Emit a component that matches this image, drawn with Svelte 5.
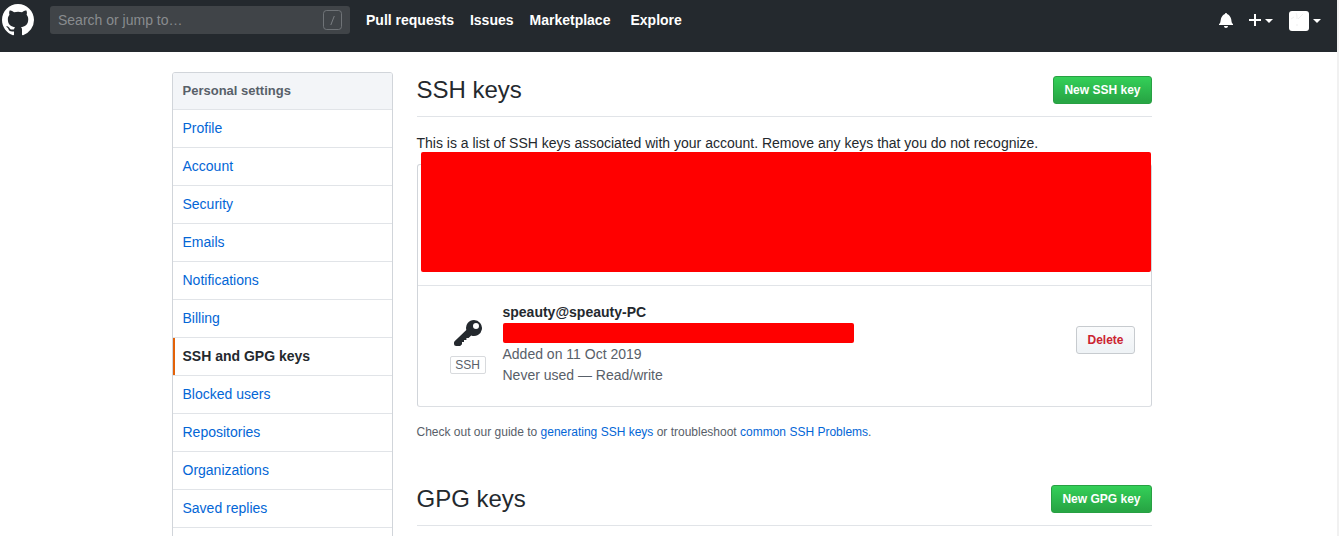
<script>
  const nav = ['Pull requests', 'Issues', 'Marketplace', 'Explore'];
  const menu = ['Profile', 'Account', 'Security', 'Emails', 'Notifications', 'Billing', 'SSH and GPG keys', 'Blocked users', 'Repositories', 'Organizations', 'Saved replies'];
  const current = 'SSH and GPG keys';
</script>

<div class="page">
  <header>
    <svg class="logo" width="32" height="32" viewBox="0 0 16 16" fill="currentColor"><path fill-rule="evenodd" d="M8 0C3.58 0 0 3.58 0 8c0 3.54 2.29 6.53 5.47 7.59.4.07.55-.17.55-.38 0-.19-.01-.82-.01-1.49-2.01.37-2.53-.49-2.69-.94-.09-.23-.48-.94-.82-1.13-.28-.15-.68-.52-.01-.53.63-.01 1.08.58 1.23.82.72 1.21 1.87.87 2.33.66.07-.52.28-.87.51-1.07-1.78-.2-3.64-.89-3.64-3.95 0-.87.31-1.59.82-2.15-.08-.2-.36-1.02.08-2.12 0 0 .67-.21 2.2.82.64-.18 1.32-.27 2-.27.68 0 1.36.09 2 .27 1.53-1.04 2.2-.82 2.2-.82.44 1.1.16 1.92.08 2.12.51.56.82 1.27.82 2.15 0 3.07-1.87 3.75-3.65 3.95.29.25.54.73.54 1.48 0 1.07-.01 1.93-.01 2.2 0 .21.15.46.55.38A8.013 8.013 0 0 0 16 8c0-4.42-3.58-8-8-8z"/></svg>
    <div class="search">
      <span>Search or jump to…</span>
      <svg width="19" height="20" viewBox="0 0 19 20" fill="none" stroke="#7b7f83"><rect x=".5" y=".5" width="18" height="19" rx="3" opacity=".8"/><path d="M11.3 6 7.8 15"/></svg>
    </div>
    <nav>{#each nav as item}<a href="#top">{item}</a>{/each}</nav>
    <div class="tools">
      <svg width="14" height="16" viewBox="0 0 14 16" fill="currentColor"><path d="M14 12v1H0v-1l.73-.58c.77-.77.81-2.55 1.19-4.42C2.69 3.23 6 2 6 2c0-.55.45-1 1-1s1 .45 1 1c0 0 3.39 1.23 4.16 5 .38 1.88.42 3.66 1.19 4.42l.66.58H14zm-7 4c1.11 0 2-.89 2-2H5c0 1.11.89 2 2 2z"/></svg>
      <div class="create">
        <svg width="12" height="16" viewBox="0 0 12 16" fill="currentColor"><path d="M12 9H7v5H5V9H0V7h5V2h2v5h5v2z"/></svg>
        <i class="caret"></i>
      </div>
      <div class="profile">
        <svg width="20" height="20" viewBox="0 0 20 20"><rect width="20" height="20" rx="3" fill="#fff"/><path d="M7 2c1 2 1 3 1 6M14 3 9 8M8 13v2M5 6 2 8" fill="none" stroke="#e8e8e8" stroke-width=".7"/></svg>
        <i class="caret"></i>
      </div>
    </div>
  </header>

  <main>
    <aside>
      <h3>Personal settings</h3>
      {#each menu as item}<a href="#top" class:selected={item === current}>{item}</a>{/each}
    </aside>
    <section>
      <div class="heading"><h2>SSH keys</h2><button class="primary">New SSH key</button></div>
      <p class="intro">This is a list of SSH keys associated with your account. Remove any keys that you do not recognize.</p>
      <div class="keys">
        <div class="covered"><div class="mask"></div></div>
        <div class="key">
          <div class="kind">
            <svg width="28" height="32" viewBox="0 0 28 32" fill="currentColor"><path fill-rule="evenodd" d="M20 2a8 8 0 0 0-7.7 10L.6 23.2Q0 23.8 0 24.7v1.2Q0 28 2.2 28h3.2q.8 0 1.3-.5L8 26.2V24h2v-2h2.4v-2h2.2l2.6-2.5A8 8 0 1 0 20 2zm2 3a3 3 0 1 1 0 6 3 3 0 0 1 0-6z"/></svg>
            <span>SSH</span>
          </div>
          <div class="details">
            <strong>speauty@speauty-PC</strong>
            <div class="fingerprint"></div>
            <span>Added on 11 Oct 2019</span>
            <span>Never used — Read/write</span>
          </div>
          <button class="delete">Delete</button>
        </div>
      </div>
      <p class="help">Check out our guide to <a href="#top">generating SSH keys</a> or troubleshoot <a href="#top">common SSH Problems</a>.</p>
      <div class="heading"><h2>GPG keys</h2><button class="primary">New GPG key</button></div>
    </section>
  </main>
</div>

<style>
  :global(body) { background: #f1f1f1; overflow: hidden; }
  * { box-sizing: border-box; }
  .page { width: 1337px; height: 536px; overflow: hidden; background: #fff; color: #24292e; font: 14px/21px "Liberation Sans", Arial, sans-serif; }
  a { color: #0366d6; text-decoration: none; }
  h2, h3, p { margin: 0; }
  svg { display: block; flex: none; }
  header { height: 52px; padding: 4px 16px 0 2px; display: flex; align-items: flex-start; background: #24292e; color: #fff; }
  .search { width: 300px; height: 28px; margin: 2px 16px 0; padding: 0 8px; display: flex; align-items: center; justify-content: space-between; border-radius: 3px; background: #404448; color: #898c8f; }
  nav { display: flex; gap: 16px; margin-top: 6px; }
  nav a { color: #fff; font-weight: 700; }
  nav a:last-child { margin-left: 4px; }
  .tools { display: flex; align-items: center; height: 32px; margin-left: auto; }
  .create, .profile { display: flex; align-items: center; gap: 4px; }
  .create { margin: 0 16px 0 16px; }
  .caret { border: 4px solid transparent; border-top-color: #fff; border-bottom: 0; margin-top: 2px; }
  .profile { padding-top: 2px; }
  .profile .caret { margin-top: 0; }
  main { width: 980px; margin: 20px 0 0 172px; display: flex; gap: 24px; }
  aside { width: 221px; height: 570px; flex: none; border: 1px solid #d1d5da; border-radius: 3px; overflow: hidden; }
  aside h3 { height: 37px; border-bottom: 1px solid #e1e4e8; padding: 0 9.5px; background: #f3f5f8; color: #586069; font-size: 13px; line-height: 35px; }
  aside a { display: block; height: 38px; padding: 0 9.5px; border-bottom: 1px solid #e1e4e8; line-height: 37px; }
  aside a.selected { color: #24292e; font-weight: 700; border-bottom: 0; background: linear-gradient(90deg, #e36209 2px, transparent 2px) 0 0 / 100% 37px no-repeat, linear-gradient(#e1e4e8, #e1e4e8) 0 37px / 100% 1px no-repeat; }
  section { width: 735px; }
  .heading { height: 45px; display: flex; justify-content: space-between; align-items: flex-start; border-bottom: 1px solid #e1e4e8; }
  h2 { font-size: 24px; line-height: 36px; font-weight: 400; margin-left: -.5px; }
  button { height: 28px; padding: 0 10.5px; border-radius: 3px; font: 700 12px/20px "Liberation Sans", Arial, sans-serif; white-space: nowrap; }
  .primary { margin-top: 4px; color: #fff; border: 1px solid #28a043; background: linear-gradient(#34d058, #28a745 90%); }
  .intro { margin: 16px 0 10px -.5px; }
  .keys { border: 1px solid #d1d5da; border-bottom-color: #dcdfe3; border-radius: 3px; height: 243px; }
  .covered { position: relative; height: 121px; border-bottom: 1px solid #e1e4e8; }
  .mask { position: absolute; left: 3px; top: -13px; width: 730px; height: 120px; border-radius: 2px; background: red; }
  .key { height: 120px; padding: 16px 16px 16px 32px; display: flex; }
  .kind { width: 36px; display: flex; flex-direction: column; align-items: center; padding-top: 16px; }
  .kind span { width: 36px; height: 18px; margin-top: 6px; border: 1px solid #d8dadd; border-radius: 2px; font-size: 12px; line-height: 16px; text-align: center; color: #586069; padding-right: 1px; }
  .details { margin-left: 16.5px; flex: 1; color: #586069; }
  .details > * { display: block; height: 21px; }
  .details strong { color: #24292e; }
  .fingerprint { width: 351px; height: 20px !important; margin: 0 0 1px .5px; border-radius: 2px; background: red; }
  .delete { align-self: center; margin-bottom: 12px; color: #cb2431; border: 1px solid #c7cbcf; background: linear-gradient(#fafbfc, #eff3f6 90%); }
  .help { margin: 16px 0 40px -.5px; height: 18px; line-height: 18px; font-size: 12px; color: #586069; }
</style>
